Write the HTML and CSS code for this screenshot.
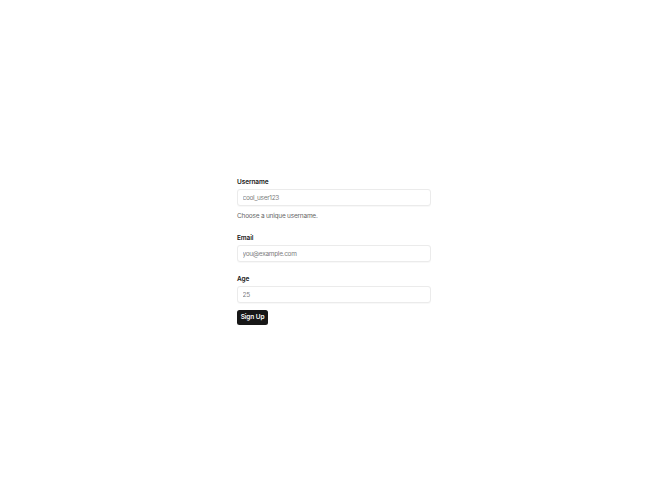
FILE: index.html
```html
<!DOCTYPE html>
<html lang="en">
<head>
<meta charset="utf-8">
<title>Sign Up</title>
<link rel="stylesheet" href="styles.css">
</head>
<body>
<main class="page">
  <form class="form">
    <div class="field">
      <label class="label" for="username">Username</label>
      <input class="input" id="username" type="text" placeholder="cool_user123">
      <p class="desc">Choose a unique username.</p>
    </div>
    <div class="field">
      <label class="label" for="email">Email</label>
      <input class="input" id="email" type="email" placeholder="you@example.com">
    </div>
    <div class="field">
      <label class="label" for="age">Age</label>
      <input class="input" id="age" type="number" placeholder="25">
    </div>
    <div class="actions">
      <button class="btn" type="button">Sign Up</button>
    </div>
  </form>
</main>
</body>
</html>
```

FILE: styles.css
```css
* { box-sizing: border-box; }
html, body { margin: 0; padding: 0; background: #ffffff; }
body {
  font-family: Inter, "Liberation Sans", sans-serif;
  color: #0a0a0a;
}
.page {
  min-height: 100vh;
  display: flex;
  align-items: center;
  justify-content: center;
}
.form {
  width: 194px;
  display: flex;
  flex-direction: column;
  gap: 11px;
}
.field {
  display: flex;
  flex-direction: column;
  gap: 2.5px;
}
.label {
  padding-top: 1.5px;
  font-size: 6.5px;
  line-height: 9px;
  font-weight: 600;
  letter-spacing: -0.1px;
  color: #171717;
}
.input {
  width: 100%;
  height: 16.75px;
  padding: 0 4.5px;
  border: 1px solid #ebebeb;
  border-radius: 3px;
  background: #ffffff;
  font-family: inherit;
  font-size: 6.5px;
  letter-spacing: -0.3px;
  color: #0a0a0a;
  outline: none;
  box-shadow: 0 0.5px 1px rgba(0,0,0,0.03);
  -moz-appearance: textfield;
}
.input::-webkit-outer-spin-button,
.input::-webkit-inner-spin-button { -webkit-appearance: none; margin: 0; }
.input::placeholder { color: #7d7d7d; }
.desc {
  margin: 3.75px 0 0;
  font-size: 6.5px;
  line-height: 9px;
  letter-spacing: -0.22px;
  color: #666666;
}
.actions {
  margin-top: -4.25px;
  display: flex;
}
.btn {
  height: 15px;
  width: 31px;
  padding: 0;
  border: none;
  border-radius: 2.5px;
  background: #171717;
  color: #fafafa;
  font-family: inherit;
  font-size: 6.5px;
  font-weight: 600;
  letter-spacing: -0.1px;
  cursor: pointer;
}
```
